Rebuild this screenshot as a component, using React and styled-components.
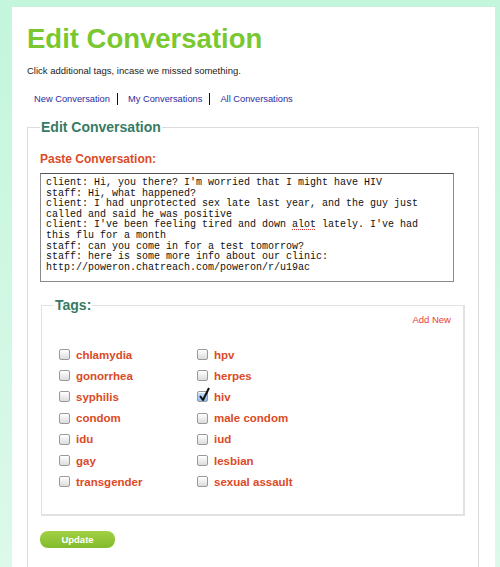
import styled, { createGlobalStyle } from 'styled-components';

const GlobalStyle = createGlobalStyle`
  html, body {
    margin: 0;
    padding: 0;
  }
  body {
    background: linear-gradient(#c3f6dc, #dcf9ea);
    font-family: 'Liberation Sans', Arial, sans-serif;
    min-height: 567px;
  }
`;

const Page = styled.div`
  padding: 7px 5px 0 12px;
`;

const Panel = styled.div`
  background: #fff;
  padding: 0 16px 0 15px;
  height: 560px;
  overflow: hidden;
`;

const Title = styled.h1`
  margin: 16px 0 0;
  font-size: 27.5px;
  line-height: 32px;
  font-weight: bold;
  color: #79c830;
`;

const Intro = styled.p`
  margin: 9px 0 0;
  font-size: 9.5px;
  line-height: 14px;
  color: #222;
`;

const Nav = styled.nav`
  display: flex;
  margin-top: 15px;
`;

const NavLink = styled.a`
  font-size: 9.3px;
  line-height: 12px;
  color: #2c2c9e;
  text-decoration: none;
  padding: 0 7px 0 10px;
  border-left: 1px solid #111;

  &:first-child {
    border-left: none;
    padding-left: 7px;
  }
`;

const Fieldset = styled.fieldset`
  margin: ${p => p.$inner ? '15px 0 0 1px' : '14px 0 0'};
  padding: ${p => p.$inner ? '0 12px 22px 12px' : '0 13px 60px 12px'};
  border: ${p => p.$inner ? '2px solid #e2e2e2' : '1px solid #dcdcdc'};
  border-width: ${p => p.$inner ? '1px 2px 2px 1px' : '1px'};
  position: relative;
`;

const Legend = styled.legend`
  padding: 0 1px;
  font-size: 14px;
  font-weight: bold;
  color: #367b64;
`;

const FieldLabel = styled.div`
  margin-top: 17px;
  font-size: 12px;
  font-weight: bold;
  color: #dc4a27;
`;

const ConversationBox = styled.div`
  margin-top: 7px;
  width: 414px;
  height: 109px;
  box-sizing: border-box;
  border: 1px solid #8a8a8a;
  border-top-color: #555;
  padding: 4px 5px 3px;
  font-family: 'Liberation Mono', 'Courier New', monospace;
  font-size: 10px;
  line-height: 10.6px;
  color: #111;
  white-space: pre-wrap;
  overflow: hidden;
`;

const Misspelled = styled.span`
  text-decoration: underline dotted #e03030;
  text-underline-offset: 2px;
`;

const AddNew = styled.a`
  display: block;
  text-align: right;
  margin-top: 1px;
  font-size: 9.5px;
  color: #e6403a;
  text-decoration: none;
`;

const TagGrid = styled.div`
  display: grid;
  grid-template-columns: 138px 1fr;
  grid-auto-rows: 21.2px;
  margin-top: 19px;
  padding-left: 5px;
`;

const Tag = styled.label`
  display: flex;
  align-items: center;
  gap: 6px;
  font-size: 11.5px;
  font-weight: bold;
  color: #dc4a27;
`;

const Box = styled.span`
  position: relative;
  width: 11px;
  height: 11px;
  flex: none;
  box-sizing: border-box;
  border: 1px solid #9a9a9a;
  border-radius: 2px;
  background: ${p => p.$checked
    ? 'linear-gradient(#cfe3fb, #8fb8ec)'
    : 'linear-gradient(#fff, #dcdcdc)'};
  box-shadow: inset 0 1px 0 #fff;

  svg {
    position: absolute;
    left: 0;
    top: -5px;
  }
`;

const UpdateButton = styled.button`
  display: block;
  margin-top: 15px;
  width: 75px;
  height: 17px;
  border: none;
  border-radius: 8px;
  background: linear-gradient(#a2d043, #82bb2c);
  color: #fff;
  font-family: 'Liberation Sans', Arial, sans-serif;
  font-size: 9.5px;
  font-weight: bold;
  padding: 0;
`;

const tags = [
  ['chlamydia', 'hpv'],
  ['gonorrhea', 'herpes'],
  ['syphilis', 'hiv'],
  ['condom', 'male condom'],
  ['idu', 'iud'],
  ['gay', 'lesbian'],
  ['transgender', 'sexual assault'],
];

const Check = () => (
  <svg width="13" height="15" viewBox="0 0 13 15">
    <path d="M2 9 L5 13 L11 1" fill="none" stroke="#111" strokeWidth="2" strokeLinejoin="round" />
  </svg>
);

const App = () => {
  return (
    <>
      <GlobalStyle />
      <Page>
        <Panel>
          <Title>Edit Conversation</Title>
          <Intro>Click additional tags, incase we missed something.</Intro>
          <Nav>
            <NavLink href="#">New Conversation</NavLink>
            <NavLink href="#">My Conversations</NavLink>
            <NavLink href="#">All Conversations</NavLink>
          </Nav>

          <Fieldset>
            <Legend>Edit Conversation</Legend>
            <FieldLabel>Paste Conversation:</FieldLabel>
            <ConversationBox>
              {`client: Hi, you there? I'm worried that I might have HIV
staff: Hi, what happened?
client: I had unprotected sex late last year, and the guy just called and said he was positive
client: I've been feeling tired and down `}<Misspelled>alot</Misspelled>{` lately. I've had this flu for a month
staff: can you come in for a test tomorrow?
staff: here is some more info about our clinic:
http://poweron.chatreach.com/poweron/r/u19ac`}
            </ConversationBox>

            <Fieldset $inner>
              <Legend>Tags:</Legend>
              <AddNew href="#">Add New</AddNew>
              <TagGrid>
                {tags.flat().map(tag => (
                  <Tag key={tag}>
                    <Box $checked={tag === 'hiv'}>{tag === 'hiv' && <Check />}</Box>
                    {tag}
                  </Tag>
                ))}
              </TagGrid>
            </Fieldset>

            <UpdateButton>Update</UpdateButton>
          </Fieldset>
        </Panel>
      </Page>
    </>
  );
};

export default App;
